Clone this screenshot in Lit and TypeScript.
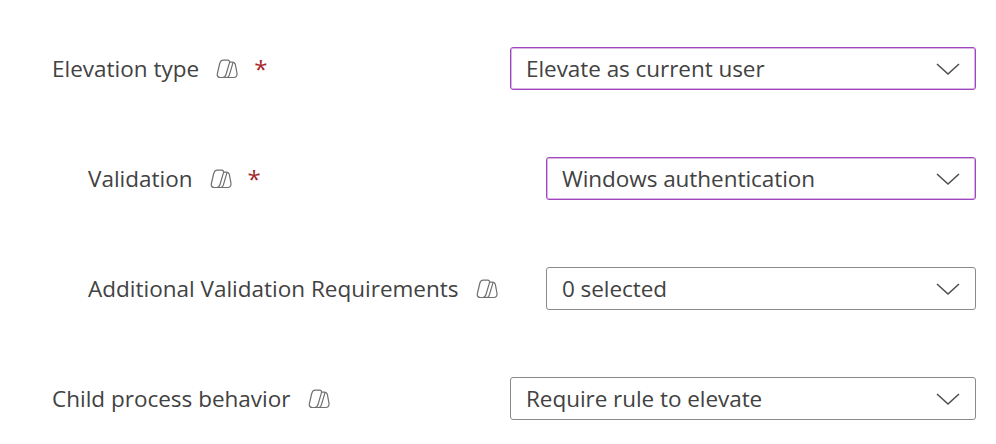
import { LitElement, html, css } from "lit";
import { customElement } from "lit/decorators.js";
import { classMap } from "lit/directives/class-map.js";

interface Field {
  label: string;
  value: string;
  required?: boolean;
  nested?: boolean;
}

const fields: Field[] = [
  { label: "Elevation type", value: "Elevate as current user", required: true },
  { label: "Validation", value: "Windows authentication", required: true, nested: true },
  { label: "Additional Validation Requirements", value: "0 selected", nested: true },
  { label: "Child process behavior", value: "Require rule to elevate" },
];

// Copilot mark next to each label
const copilot = html`<svg class="copilot" width="23" height="20" viewBox="0 0 23 20" fill="none" stroke="#707070" stroke-width="1.2">
  <path d="M7.5 1.2h4.2c1.4 0 2.2 1.1 1.8 2.4L10 15.5c-.5 1.7-1.6 3-3.4 3H4.2c-2 0-3.3-1.5-2.9-3.5L3.6 5c.5-2.3 1.9-3.8 3.9-3.8Z"/>
  <path d="M13 3.2h3.2c1.6 0 2.8 1 3.2 2.5l1.6 8.6c.4 2.3-1 4.2-3.4 4.2H6.6"/>
  <path d="M17 3.6 13.4 15.8c-.5 1.6-1.6 2.7-3 2.7"/>
</svg>`;

const chevron = html`<svg class="chevron" width="24" height="14" viewBox="0 0 24 14" fill="none" stroke="#4f4f4f" stroke-width="1.6">
  <path d="M1 2l11 10L23 2"/>
</svg>`;

@customElement("app-root")
export class AppRoot extends LitElement {
  static override styles = css`
    :host {
      display: block;
      min-height: 444px;
      background: #fff;
      font-family: "Open Sans", "Noto Sans", sans-serif;
      color: #424242;
    }
    .form {
      display: flex;
      flex-direction: column;
      gap: 67px;
      padding: 47px 20px 0 52px;
    }
    .row {
      display: flex;
      align-items: center;
      justify-content: space-between;
    }
    .row.nested {
      padding-left: 36px;
    }
    .label {
      display: flex;
      align-items: center;
      font-size: 22.5px;
      line-height: 43px;
    }
    .copilot {
      margin-left: 17px;
    }
    .star {
      color: #a4262c;
      margin-left: 15px;
      font-size: 24px;
      line-height: 1;
    }
    .select {
      box-sizing: border-box;
      height: 43px;
      width: 466px;
      display: flex;
      align-items: center;
      justify-content: space-between;
      padding: 0 15px 0 15px;
      border: 1px solid #8a8a8a;
      border-radius: 3px;
      font-size: 22.5px;
      letter-spacing: -0.05px;
    }
    .nested .select {
      width: 430px;
    }
    .select.active {
      border-color: #9f45bd;
      box-shadow: inset 0 0 0 1px rgba(159, 69, 189, 0.4);
    }
  `;

  override render() {
    return html`
      <div class="form">
        ${fields.map(
          (f) => html`
            <div class=${classMap({ row: true, nested: !!f.nested })}>
              <div class="label">
                <span>${f.label}</span>
                ${copilot}
                ${f.required ? html`<span class="star">*</span>` : ""}
              </div>
              <div class=${classMap({ select: true, active: !!f.required })}>
                <span>${f.value}</span>
                ${chevron}
              </div>
            </div>
          `
        )}
      </div>
    `;
  }
}
